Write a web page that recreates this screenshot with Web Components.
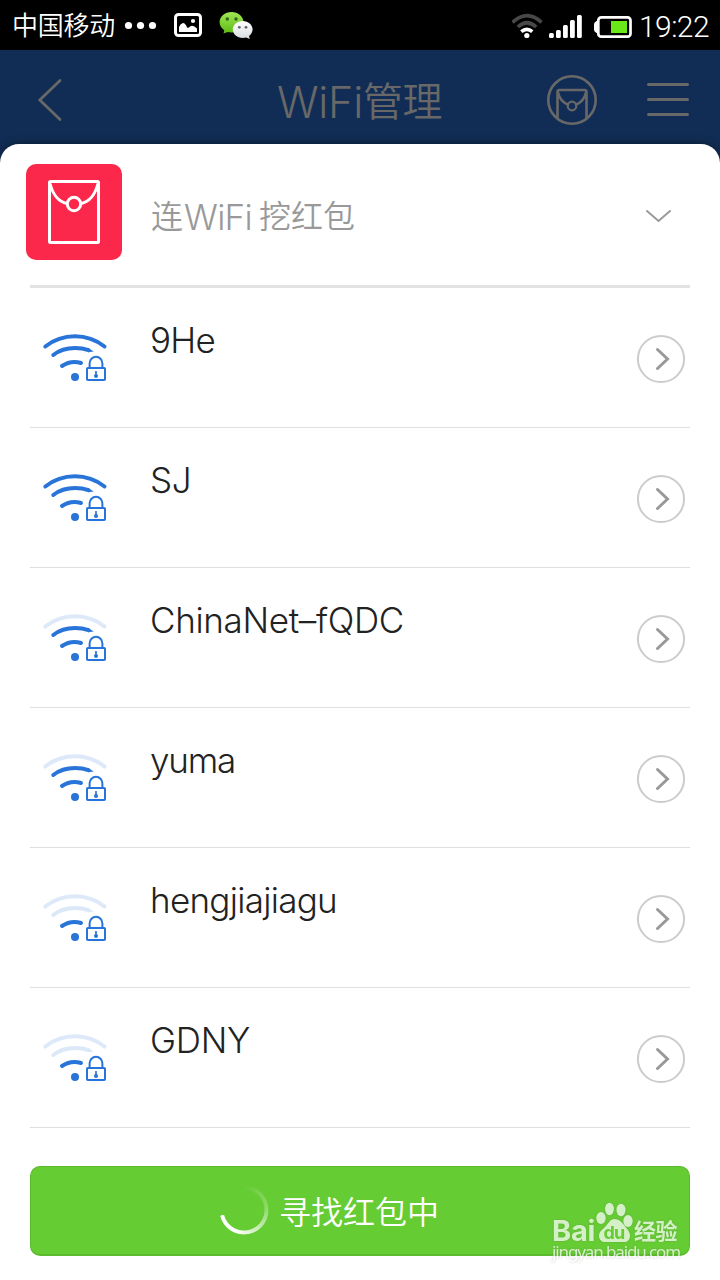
<!DOCTYPE html>
<html lang="zh-CN">
<head>
<meta charset="utf-8">
<title>WiFi管理</title>
<style>
body{margin:0;width:720px;height:1280px;overflow:hidden;background:#fff;font-family:Inter,"Noto Sans CJK SC",sans-serif;font-weight:300}
</style>
</head>
<body>
<wifi-app></wifi-app>
<script>
const define=(name,html,setup)=>customElements.define(name,class extends HTMLElement{
  constructor(){super();const t=document.createElement('template');t.innerHTML=html;this.attachShadow({mode:'open'}).append(t.content.cloneNode(true));}
  connectedCallback(){if(setup)setup(this,this.shadowRoot);}
});

define('wifi-app',`<style>
:host{display:flex;flex-direction:column;width:720px;height:1280px;background:#112d55;overflow:hidden}
</style>
<status-bar></status-bar>
<nav-header></nav-header>
<wifi-sheet></wifi-sheet>`);

define('status-bar',`<style>
:host{display:flex;box-sizing:border-box;height:50px;flex:none;background:#000;color:#fff;padding-left:12px}
.carrier{font:350 26px/47px "Noto Sans CJK SC",sans-serif;width:104px}
.time{font:300 30px/53px Roboto,sans-serif;margin-left:6px}
svg{display:block}
.gap{width:256px}
</style>
<fit-label class="carrier" width="103">中国移动</fit-label>
<svg width="140" height="50" viewBox="116 0 140 50">
<defs><linearGradient id="g" x2="0" y2="1"><stop stop-color="#a2e653"/><stop offset="1" stop-color="#5dbb16"/></linearGradient>
<linearGradient id="w" x2="0" y2="1"><stop stop-color="#fff"/><stop offset="1" stop-color="#d8dde0"/></linearGradient></defs>
<g fill="#fff"><circle cx="128.5" cy="25.5" r="3.6"/><circle cx="140.5" cy="25.5" r="3.6"/><circle cx="152.5" cy="25.5" r="3.6"/></g>
<rect x="175.5" y="14.5" width="25" height="21" rx="3" fill="none" stroke="#fff" stroke-width="3"/>
<path d="M179 32v-5q1.500-3.500 4-4 2.500 0 4 4.500 1.500 1 3-1 3-2 7 2v3.500z" fill="#fff"/><circle cx="193" cy="21" r="2.100" fill="#fff"/>
<path d="M231.500 12c6.700 0 12 4.500 12 10.300s-5.300 10.200-12 10.200c-1.300 0-2.600-.2-3.800-.5l-4.200 1.500.8-3.300c-2.900-1.900-4.700-4.700-4.700-7.900 0-5.800 5.200-10.300 11.900-10.300z" fill="url(#g)"/>
<circle cx="227.300" cy="19" r="1.700" fill="#306318"/><circle cx="236" cy="19" r="1.700" fill="#306318"/>
<path d="M242.700 21c5.500 0 9.900 3.800 9.900 8.600 0 2.500-1.400 4.900-3.600 6.500l.8 2.900-3.600-1.500c-1.100.3-2.300.5-3.500.5-5.500 0-9.900-3.800-9.900-8.400 0-4.800 4.400-8.600 9.900-8.600z" fill="url(#w)"/>
<circle cx="239.300" cy="27.300" r="1.400" fill="#666"/><circle cx="246" cy="27.300" r="1.400" fill="#666"/>
</svg>
<div class="gap"></div>
<svg width="121" height="50" viewBox="512 0 121 50">
<g fill="none" stroke-width="3.600" stroke="#484848"><path d="M512.500 22.300Q527 9 541.500 22.300"/><path d="M517.800 27Q527 18.500 536.200 27"/><path stroke="#fff" d="M521.300 31.600Q526.800 27 532.300 31.600"/></g>
<circle cx="526.800" cy="35.500" r="2.600" fill="#fff"/>
<g fill="#fff"><rect x="549" y="33" width="4.800" height="5" rx="1.500"/><rect x="556" y="30" width="4.800" height="8" rx="1.500"/><rect x="563" y="25" width="4.800" height="13" rx="1.500"/><rect x="570" y="20" width="4.800" height="18" rx="1.500"/><rect x="577" y="15" width="4.800" height="23" rx="1.500"/>
<path d="M598 21h-1.500q-2.500 1.500-2.500 3v6q0 1.500 2.500 3H598z"/></g>
<rect x="598.300" y="17.300" width="32.200" height="19.400" rx="3" fill="none" stroke="#fff" stroke-width="2.700"/><rect x="611" y="21" width="16" height="12" fill="#6ae817"/>
</svg>
<fit-label class="time" width="70">19:22</fit-label>`);

define('nav-header',`<style>
:host{display:grid;grid-template-columns:277px 249px 1fr;height:94px;flex:none;color:#686868}
.title{font-size:43px;line-height:104px;display:flex}
.cn{font-size:40px;font-weight:350}
svg{display:block}
</style>
<svg width="277" height="94" viewBox="0 50 277 94" fill="none" stroke="#686868" stroke-width="2.800" stroke-linecap="round"><path d="M60 80.500 39.800 100 60 119.500"/></svg>
<div class="title"><fit-label width="86">WiFi</fit-label><fit-label class="cn" width="79">管理</fit-label></div>
<svg width="194" height="94" viewBox="526 50 194 94" fill="none" stroke="#686868" stroke-width="2.600" stroke-linecap="round">
<circle cx="572" cy="100" r="23.700"/><path d="M557.500 117V92q0-2 2-2h25q2 0 2 2v25M558 92.500Q560 101.500 568 104.500M586 92.500Q584 101.500 576 104.500"/><circle cx="572" cy="106" r="4.300" stroke-width="2.200"/>
<path stroke-width="3" d="M648.500 84.500h39M648.500 99.500h39M648.500 114.500h39"/></svg>`);

define('wifi-sheet',`<style>
:host{display:flex;flex-direction:column;height:1136px;flex:none;background:#fff;border-radius:19px 19px 0 0;box-shadow:0 0 10px rgba(0,0,0,.45)}
.list{padding:0 30px}
.foot{position:relative;padding:38px 30px 0}
bd-mark{position:absolute;left:550px;top:70px}
</style>
<promo-row></promo-row>
<div class="list">
<wifi-row level="3" w="65">9He</wifi-row>
<wifi-row level="3" w="41">SJ</wifi-row>
<wifi-row level="2" w="254">ChinaNet–fQDC</wifi-row>
<wifi-row level="2" w="85">yuma</wifi-row>
<wifi-row level="1" w="187">hengjiajiagu</wifi-row>
<wifi-row level="1" w="100">GDNY</wifi-row>
</div>
<div class="foot"><search-button>寻找红包中</search-button><bd-mark></bd-mark></div>`);

define('promo-row',`<style>
:host{display:flex;box-sizing:border-box;height:144px;margin:0 30px;border-bottom:3px solid #e3e3e3;color:#999}
.pack{flex:none;width:96px;height:96px;margin:20px 0 0 -4px;border-radius:10px;background:#fb284b}
.text{display:flex;font-size:35px;line-height:147px;margin-left:29px;width:470px}
.cn{font-size:32px;line-height:146px;font-weight:350}
.wifi{margin:0 7px 0 1px}
svg{display:block}
</style>
<div class="pack"><svg width="96" height="96" viewBox="26 164 96 96" fill="none" stroke="#fff" stroke-width="3"><rect x="49.500" y="181.500" width="49" height="61" rx="1"/><path d="M50 183.500Q54.500 201 67 203.500M98 183.500Q93.500 201 81 203.500"/><circle cx="74" cy="204" r="6.700"/></svg></div>
<div class="text"><fit-label class="cn" width="32">连</fit-label><fit-label class="wifi" width="68">WiFi</fit-label><fit-label class="cn" width="96">挖红包</fit-label></div>
<svg width="60" height="140" viewBox="621 144 60 140" fill="none" stroke="#999" stroke-width="2" stroke-linecap="round"><path d="M647 211 658.500 221 670 211"/></svg>`);

define('wifi-row',`<style>
:host{display:flex;box-sizing:border-box;height:140px;border-bottom:1px solid #e0e0e0;color:#222}
.name{font-size:35px;line-height:40px;margin:32px 0 0 40px;flex:1}
svg{display:block;flex:none}
.off{opacity:.16}
</style>
<svg width="80" height="120" viewBox="30 288 80 120" fill="none" stroke="#2974d8" stroke-width="4" stroke-linecap="round">
<path class="a3" d="M45.300 346.500A48 48 0 0 1 104.500 346.500"/>
<g class="a2"><path d="M53.300 355Q62 348 75 348 82.500 348 88.500 350.200"/><path stroke="none" fill="#2974d8" d="M88 348 93.800 351.500 88 352.200z"/></g>
<path class="a1" d="M62 366Q71 360 81 363"/><circle cx="75" cy="377" r="4" stroke="none" fill="#2974d8"/>
<path stroke="#fff" stroke-width="3" d="M84.500 359v7"/>
<g stroke-width="2"><rect x="87" y="368" width="18" height="12" rx=".8"/><path stroke-linecap="butt" d="M89.600 368v-4.500a6.400 6.700 0 0 1 12.800 0v4.500"/></g>
<path stroke-width="1.700" stroke-linecap="butt" d="M96 371v5"/><circle cx="96" cy="376" r="2" stroke="none" fill="#2974d8"/>
</svg>
<div class="name"><fit-label><slot></slot></fit-label></div>
<svg width="54" height="139" viewBox="636 288 54 139" fill="none"><circle cx="661" cy="359" r="23.100" stroke="#ccc" stroke-width="2"/><path d="M657.500 349.500 667.500 359 657.500 368.500" stroke="#999" stroke-width="3" stroke-linecap="round"/></svg>`,
(el,root)=>{const n=+el.getAttribute('level');for(let i=n+1;i<4;i++)root.querySelectorAll('.a'+i).forEach(p=>p.classList.add('off'));
root.querySelector('fit-label').setAttribute('width',el.getAttribute('w'));});

define('search-button',`<style>
:host{display:flex;box-sizing:border-box;height:90px;padding-left:188px;border:1px solid #5bba2d;border-bottom-width:2px;border-radius:10px;background:#66cc33;color:#fff;font:350 32px/86px "Noto Sans CJK SC",sans-serif}
.spin{width:50px;height:50px;margin:18px 10px 0 0;border-radius:50%;background:conic-gradient(rgba(255,255,255,0) 0deg,rgba(255,255,255,.25) 80deg,#fff 200deg 256deg,rgba(255,255,255,0) 257deg);-webkit-mask:radial-gradient(circle,transparent 20px,#000 21px 24px,transparent 25px);mask:radial-gradient(circle,transparent 20px,#000 21px 24px,transparent 25px)}
</style><div class="spin"></div><fit-label width="160"><slot></slot></fit-label>`);

define('bd-mark',`<style>
:host{display:flex;flex-direction:column;width:134px;color:#fff;opacity:.72;filter:drop-shadow(0 0 1px rgba(90,120,80,.5))}
.top{display:flex;align-items:flex-start;height:44px}
.bai{font:700 29px/30px Inter,sans-serif;margin:18px 0 0 2px;width:43px}
.paw{display:grid;width:38px;height:44px}
.paw>*{grid-area:1/1}
.du{font:700 18px/18px Inter,sans-serif;color:#66cc33;justify-self:center;align-self:start;margin-top:26px}
.cn{font:700 22px/26px "Noto Sans CJK SC",sans-serif;margin:18px 0 0 1px}
.url{font:400 17px/20px "Noto Sans",sans-serif;margin-left:2px}
</style>
<div class="top"><fit-label class="bai" width="43">Bai</fit-label>
<div class="paw"><svg width="38" height="44" viewBox="595 1198 38 44" fill="#fff"><ellipse cx="601" cy="1218" rx="4.700" ry="6"/><ellipse cx="609.500" cy="1209" rx="4.400" ry="6.200"/><ellipse cx="621" cy="1210" rx="4.500" ry="6.200"/><ellipse cx="628" cy="1221" rx="4.700" ry="6"/><path d="M614.500 1219c5 0 8 4 11 8s4.500 5 4.500 9c0 4-3 6.500-7 6.500h-16c-5 0-8-2.500-8-6.500s2.500-5.500 6-9 5-8 9.500-8z"/></svg><fit-label class="du" width="21">du</fit-label></div>
<fit-label class="cn" width="43">经验</fit-label></div>
<fit-label class="url" width="128">jingyan.baidu.com</fit-label>`);

/* Spaces its text so that it fills the given advance width. */
customElements.define('fit-label',class extends HTMLElement{
  static observedAttributes=['width'];
  constructor(){super();this.attachShadow({mode:'open'}).innerHTML='<style>:host{display:inline-block;white-space:nowrap}span{display:inline-block}</style><span><slot></slot></span>';}
  connectedCallback(){this.fit();}
  attributeChangedCallback(){this.fit();}
  fit(){
    const width=+this.getAttribute('width');if(!width||!this.isConnected)return;
    const span=this.shadowRoot.querySelector('span');span.style.letterSpacing='0';
    const slot=this.shadowRoot.querySelector('slot');
    const n=slot.assignedNodes({flatten:true}).map(x=>x.textContent).join('').length;
    if(n)span.style.letterSpacing=(width-span.getBoundingClientRect().width)/n+'px';
  }
});
</script>
</body>
</html>
